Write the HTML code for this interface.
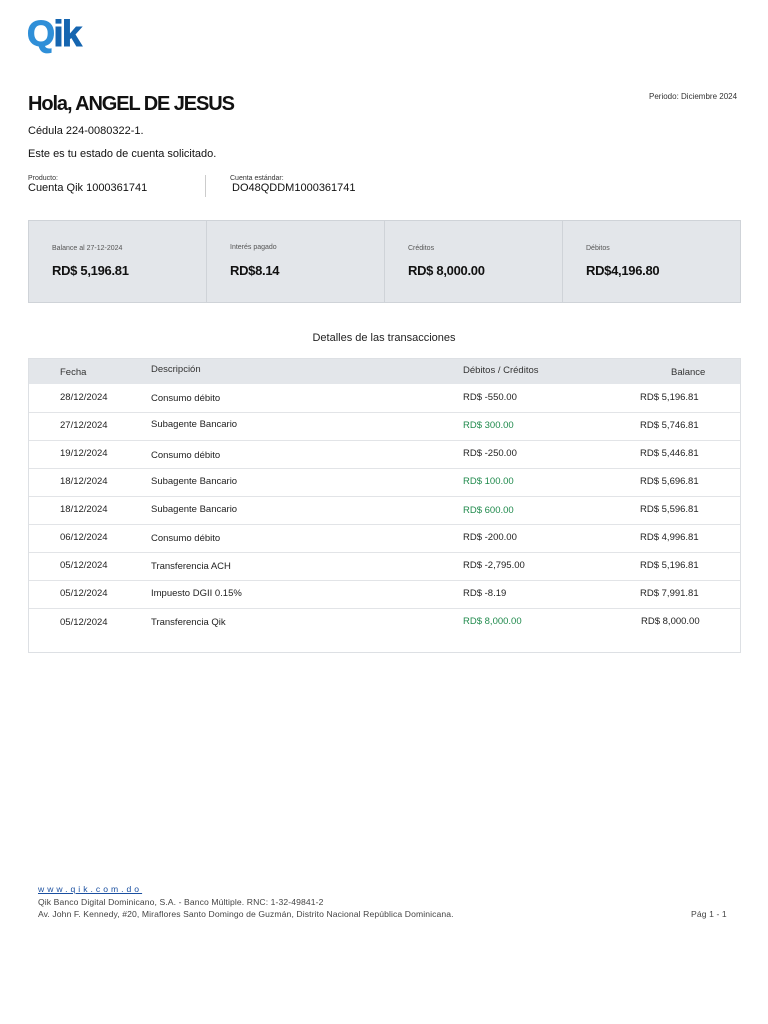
<!DOCTYPE html>
<html><head><meta charset="utf-8"><style>
body{margin:0;width:768px;height:1024px;background:#fff;font-family:"Liberation Sans",sans-serif;color:#111;position:relative;overflow:hidden}
.a{position:absolute;white-space:nowrap}
.sum{position:absolute;left:28px;top:220px;width:711px;height:81px;background:#e3e6ea;border:1px solid #cfd3d8}
.sum div.c{position:absolute;top:0;height:81px;border-left:1px solid #cfd3d8}
.lbl{font-size:7px;color:#555}
.big{font-size:13px;font-weight:bold;letter-spacing:-0.3px}
.tbl{position:absolute;left:28px;top:358px;width:711px;height:293px;border:1px solid #dde0e4}
.th{position:absolute;left:0;top:0;width:711px;height:25px;background:#e3e6ea}
.row{position:absolute;left:0;width:711px;height:28px;border-bottom:1px solid #e2e4e7;font-size:9.5px;color:#222}
.row span{position:absolute}
.g{color:#1f8a4c}
.f{font-size:8.6px;color:#444;letter-spacing:0.1px}
</style></head><body>
<div class="a" style="left:27px;top:13px;font-size:36px;font-weight:900;letter-spacing:-1.5px;-webkit-text-stroke:1px #1565b0"><span style="color:#2f8fd8;-webkit-text-stroke:1px #2f8fd8">Q</span><span style="color:#1565b0">ik</span></div>
<div class="a" style="left:28px;top:93px;font-size:20px;font-weight:bold;letter-spacing:-1.1px">Hola, ANGEL DE JESUS</div>
<div class="a" style="left:649px;top:92px;font-size:8px;color:#333">Periodo: Diciembre 2024</div>
<div class="a" style="left:28px;top:125px;font-size:11px">Cédula 224-0080322-1.</div>
<div class="a" style="left:28px;top:148px;font-size:11px">Este es tu estado de cuenta solicitado.</div>
<div class="a" style="left:28px;top:175px;font-size:7px;color:#333">Producto:</div>
<div class="a" style="left:28px;top:182px;font-size:11px">Cuenta Qik 1000361741</div>
<div class="a" style="left:205px;top:175px;width:1px;height:22px;background:#ccc"></div>
<div class="a" style="left:230px;top:175px;font-size:7px;color:#333">Cuenta estándar:</div>
<div class="a" style="left:232px;top:182px;font-size:11px">DO48QDDM1000361741</div>
<div class="sum">
<div class="c" style="left:177px"></div><div class="c" style="left:355px"></div><div class="c" style="left:533px"></div>
<div class="a lbl" style="left:23px;top:24px">Balance al 27-12-2024</div><div class="a big" style="left:23px;top:42px">RD$ 5,196.81</div>
<div class="a lbl" style="left:201px;top:23px">Interés pagado</div><div class="a big" style="left:201px;top:42px">RD$8.14</div>
<div class="a lbl" style="left:379px;top:24px">Créditos</div><div class="a big" style="left:379px;top:42px">RD$ 8,000.00</div>
<div class="a lbl" style="left:557px;top:24px">Débitos</div><div class="a big" style="left:557px;top:42px">RD$4,196.80</div>
</div>
<div class="a" style="left:0;width:768px;text-align:center;top:332px;font-size:11px;color:#222">Detalles de las transacciones</div>
<div class="tbl">
<div class="th" style="font-size:9.5px;color:#333"><span class="a" style="left:31px;top:8px">Fecha</span><span class="a" style="left:122px;top:5px">Descripción</span><span class="a" style="left:434px;top:6px">Débitos / Créditos</span><span class="a" style="left:642px;top:8px">Balance</span></div>
<div class="row" style="top:25px"><span style="left:31px;top:8px">28/12/2024</span><span style="left:122px;top:9px">Consumo débito</span><span style="left:434px;top:8px">RD$ -550.00</span><span style="left:611px;top:8px">RD$ 5,196.81</span></div>
<div class="row" style="top:53px"><span style="left:31px;top:8px">27/12/2024</span><span style="left:122px;top:7px">Subagente Bancario</span><span class="g" style="left:434px;top:8px">RD$ 300.00</span><span style="left:611px;top:8px">RD$ 5,746.81</span></div>
<div class="row" style="top:81px"><span style="left:31px;top:8px">19/12/2024</span><span style="left:122px;top:10px">Consumo débito</span><span style="left:434px;top:8px">RD$ -250.00</span><span style="left:611px;top:8px">RD$ 5,446.81</span></div>
<div class="row" style="top:109px"><span style="left:31px;top:8px">18/12/2024</span><span style="left:122px;top:8px">Subagente Bancario</span><span class="g" style="left:434px;top:8px">RD$ 100.00</span><span style="left:611px;top:8px">RD$ 5,696.81</span></div>
<div class="row" style="top:137px"><span style="left:31px;top:8px">18/12/2024</span><span style="left:122px;top:8px">Subagente Bancario</span><span class="g" style="left:434px;top:9px">RD$ 600.00</span><span style="left:611px;top:8px">RD$ 5,596.81</span></div>
<div class="row" style="top:165px"><span style="left:31px;top:8px">06/12/2024</span><span style="left:122px;top:9px">Consumo débito</span><span style="left:434px;top:8px">RD$ -200.00</span><span style="left:611px;top:8px">RD$ 4,996.81</span></div>
<div class="row" style="top:193px"><span style="left:31px;top:8px">05/12/2024</span><span style="left:122px;top:9px">Transferencia ACH</span><span style="left:434px;top:8px">RD$ -2,795.00</span><span style="left:611px;top:8px">RD$ 5,196.81</span></div>
<div class="row" style="top:221px"><span style="left:31px;top:8px">05/12/2024</span><span style="left:122px;top:8px">Impuesto DGII 0.15%</span><span style="left:434px;top:8px">RD$ -8.19</span><span style="left:611px;top:8px">RD$ 7,991.81</span></div>
<div class="row" style="top:249px;border:none"><span style="left:31px;top:9px">05/12/2024</span><span style="left:122px;top:9px">Transferencia Qik</span><span class="g" style="left:434px;top:8px">RD$ 8,000.00</span><span style="left:612px;top:8px">RD$ 8,000.00</span></div>
</div>
<div class="a f" style="left:38px;top:884px;color:#1a4fa0;text-decoration:underline;letter-spacing:3px">www.qik.com.do </div>
<div class="a f" style="left:38px;top:897px">Qik Banco Digital Dominicano, S.A. - Banco Múltiple. RNC: 1-32-49841-2</div>
<div class="a f" style="left:38px;top:909px">Av. John F. Kennedy, #20, Miraflores Santo Domingo de Guzmán, Distrito Nacional República Dominicana.</div>
<div class="a f" style="left:691px;top:909px">Pág 1 - 1</div>
</body></html>
